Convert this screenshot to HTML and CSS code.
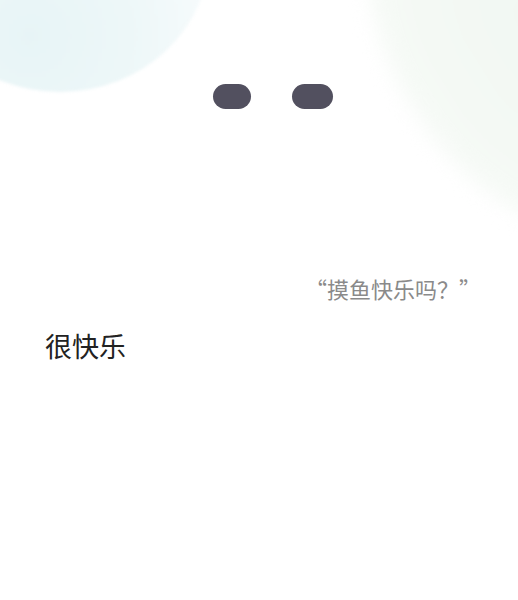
FILE: index.html
```html
<!DOCTYPE html>
<html lang="zh">
<head>
<meta charset="utf-8">
<link rel="stylesheet" href="styles.css">
</head>
<body>
<div class="page">
  <div class="blob blob-left"></div>
  <div class="blob blob-right"></div>
  <div class="eyes">
    <span class="eye eye-l"></span>
    <span class="eye eye-r"></span>
  </div>
  <p class="question">“摸鱼快乐吗？”</p>
  <p class="answer">很快乐</p>
</div>
</body>
</html>
```
FILE: styles.css
```css
html, body {
  margin: 0;
  padding: 0;
  background: #ffffff;
}
.page {
  position: relative;
  width: 518px;
  height: 600px;
  overflow: hidden;
  font-family: "Noto Sans CJK SC", "Noto Sans", sans-serif;
}
.blob {
  position: absolute;
  border-radius: 50%;
  pointer-events: none;
}
.blob-left {
  left: -90px;
  top: -190px;
  width: 300px;
  height: 282px;
  background: radial-gradient(circle at 40% 80%, #e7f4f6 0%, #edf7f8 35%, #f7fbfc 65%, #ffffff 100%);
  filter: blur(1.5px);
}
.blob-right {
  left: 320px;
  top: -120px;
  width: 440px;
  height: 300px;
  transform: rotate(58deg);
  background: radial-gradient(ellipse at 50% 50%, #f1f7f2 0%, #f4f9f4 50%, #f8fbf8 80%, rgba(255,255,255,0) 100%);
  filter: blur(10px);
}
.eyes {
  position: relative;
  display: flex;
  padding: 84px 0 0 213px;
  gap: 41px;
}
.eye {
  display: block;
  height: 25px;
  border-radius: 13px;
  background: #52505f;
}
.eye-l { width: 38px; }
.eye-r { width: 41px; }
.question {
  position: relative;
  margin: 164px 0 0 0;
  padding-right: 37px;
  text-align: right;
  font-size: 22px;
  line-height: 30px;
  color: #8a8a8a;
}
.answer {
  position: relative;
  margin: 25px 0 0 45px;
  font-size: 27px;
  line-height: 36px;
  color: #222222;
}
```
